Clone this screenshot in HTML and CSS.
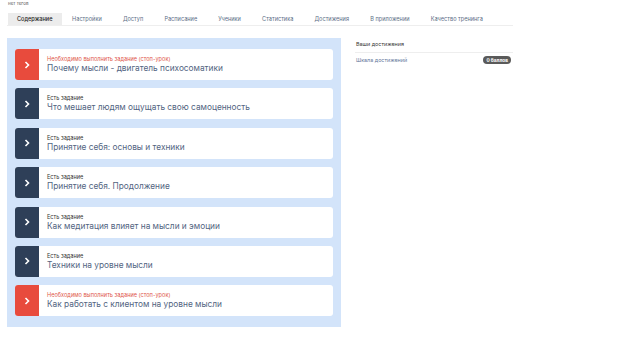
FILE: index.html
```html
<!DOCTYPE html>
<html lang="ru">
<head>
  <meta charset="UTF-8">
  <title>Курс</title>
  <link rel="stylesheet" href="styles.css">
</head>
<body>
  <div class="page">
    <div class="tags">нет тегов</div>

    <div class="tabs">
      <a class="active" href="#">Содержание</a>
      <a href="#">Настройки</a>
      <a href="#">Доступ</a>
      <a href="#">Расписание</a>
      <a href="#">Ученики</a>
      <a href="#">Статистика</a>
      <a href="#">Достижения</a>
      <a href="#">В приложении</a>
      <a href="#">Качество тренинга</a>
    </div>

    <div class="layout">
      <div class="lessons">
        <div class="lesson stop">
          <div class="lesson-icon"><svg viewBox="0 0 8 10"><path d="M2.5 2 L5.5 5 L2.5 8"/></svg></div>
          <div class="lesson-body">
            <div class="lesson-label">Необходимо выполнить задание (стоп-урок)</div>
            <div class="lesson-title">Почему мысли - двигатель психосоматики</div>
          </div>
        </div>
        <div class="lesson">
          <div class="lesson-icon"><svg viewBox="0 0 8 10"><path d="M2.5 2 L5.5 5 L2.5 8"/></svg></div>
          <div class="lesson-body">
            <div class="lesson-label">Есть задание</div>
            <div class="lesson-title">Что мешает людям ощущать свою самоценность</div>
          </div>
        </div>
        <div class="lesson">
          <div class="lesson-icon"><svg viewBox="0 0 8 10"><path d="M2.5 2 L5.5 5 L2.5 8"/></svg></div>
          <div class="lesson-body">
            <div class="lesson-label">Есть задание</div>
            <div class="lesson-title">Принятие себя: основы и техники</div>
          </div>
        </div>
        <div class="lesson">
          <div class="lesson-icon"><svg viewBox="0 0 8 10"><path d="M2.5 2 L5.5 5 L2.5 8"/></svg></div>
          <div class="lesson-body">
            <div class="lesson-label">Есть задание</div>
            <div class="lesson-title">Принятие себя. Продолжение</div>
          </div>
        </div>
        <div class="lesson">
          <div class="lesson-icon"><svg viewBox="0 0 8 10"><path d="M2.5 2 L5.5 5 L2.5 8"/></svg></div>
          <div class="lesson-body">
            <div class="lesson-label">Есть задание</div>
            <div class="lesson-title">Как медитация влияет на мысли и эмоции</div>
          </div>
        </div>
        <div class="lesson">
          <div class="lesson-icon"><svg viewBox="0 0 8 10"><path d="M2.5 2 L5.5 5 L2.5 8"/></svg></div>
          <div class="lesson-body">
            <div class="lesson-label">Есть задание</div>
            <div class="lesson-title">Техники на уровне мысли</div>
          </div>
        </div>
        <div class="lesson stop">
          <div class="lesson-icon"><svg viewBox="0 0 8 10"><path d="M2.5 2 L5.5 5 L2.5 8"/></svg></div>
          <div class="lesson-body">
            <div class="lesson-label">Необходимо выполнить задание (стоп-урок)</div>
            <div class="lesson-title">Как работать с клиентом на уровне мысли</div>
          </div>
        </div>
      </div>

      <div class="achievements">
        <div class="achievements-title">Ваши достижения</div>
        <div class="achievements-row">
          <a href="#">Шкала достижений</a>
          <span class="badge">0 баллов</span>
        </div>
      </div>
    </div>
  </div>
</body>
</html>
```

FILE: styles.css
```css
*, *::before, *::after {
  box-sizing: border-box;
}

body {
  margin: 0;
  font-family: 'Inter', 'Noto Sans', sans-serif;
  background: #fff;
  color: #333;
}

.page {
  padding: 1px 0 0 7px;
  width: 513px;
}

.tags {
  font-size: 4.5px;
  color: #555;
  padding-left: 1px;
  height: 7px;
  line-height: 6px;
}

.tabs {
  display: flex;
  margin-top: 5px;
  border-bottom: 1px solid #eee;
  white-space: nowrap;
}

.tabs a {
  display: block;
  font-size: 5.6px;
  line-height: 12px;
  padding: 0 10.6px;
  color: #5c6e86;
  text-decoration: none;
}

.tabs a.active {
  background: #ececec;
  color: #222;
  font-weight: 500;
  padding: 0 9px;
  margin-left: 1px;
}

.layout {
  display: flex;
  gap: 14px;
  margin-top: 12px;
  align-items: flex-start;
}

.lessons {
  width: 334px;
  background: #d3e4fa;
  padding: 11px 8px 11px 8px;
  display: flex;
  flex-direction: column;
  gap: 8.4px;
}

.lesson {
  display: flex;
  height: 31px;
  background: #fff;
  border-radius: 3px;
}

.lesson-icon {
  width: 24px;
  flex-shrink: 0;
  background: #2e3f58;
  border-radius: 3px 0 0 3px;
  display: flex;
  align-items: center;
  justify-content: center;
}

.lesson.stop .lesson-icon {
  background: #e84b3d;
}

.lesson-icon svg {
  width: 8px;
  height: 10px;
  fill: none;
  stroke: #fff;
  stroke-width: 1.6;
}

.lesson-body {
  padding-left: 8px;
  padding-top: 1px;
  display: flex;
  flex-direction: column;
  justify-content: center;
}

.lesson-label {
  font-size: 5.6px;
  line-height: 7px;
  color: #333;
}

.lesson.stop .lesson-label {
  color: #e0564a;
}

.lesson-title {
  font-size: 8.3px;
  line-height: 11px;
  color: #52647f;
}

.achievements {
  width: 158px;
  padding-top: 3px;
}

.achievements-title {
  font-size: 5.4px;
  color: #333;
  padding: 0 0 5px 1px;
  border-bottom: 1px solid #eee;
}

.achievements-row {
  display: flex;
  justify-content: space-between;
  align-items: center;
  padding: 3px 2px 0 1px;
}

.achievements-row a {
  font-size: 5.4px;
  color: #5f769a;
  text-decoration: none;
}

.badge {
  background: #5a5a5a;
  color: #fff;
  font-size: 4.8px;
  font-weight: 700;
  border-radius: 4px;
  padding: 1px 3px;
  line-height: 6px;
}
```
